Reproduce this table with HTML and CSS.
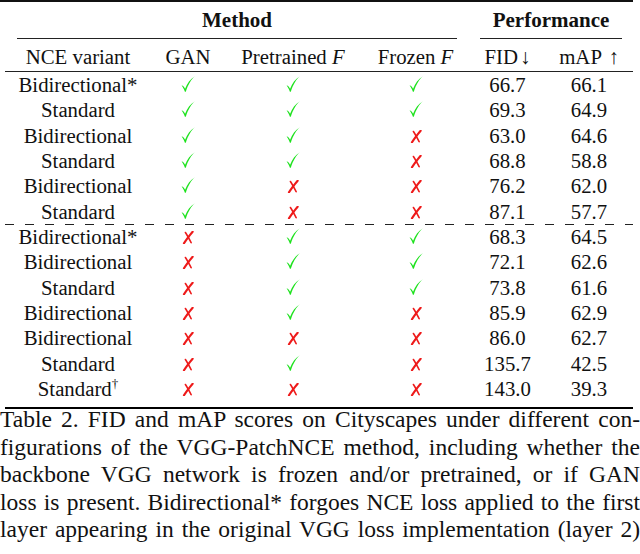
FILE: index.html
```html
<!DOCTYPE html>
<html>
<head>
<meta charset="utf-8">
<link rel="stylesheet" href="styles.css">
</head>
<body>
<div class="page">
  <div class="toprule"></div>
  <div class="grid">
    <div class="group method">Method</div>
    <div class="group perf">Performance</div>

    <div class="hd">NCE variant</div>
    <div class="hd">GAN</div>
    <div class="hd">Pretrained <i>F</i></div>
    <div class="hd">Frozen <i>F</i></div>
    <div class="hd">FID<span class="arr">↓</span></div>
    <div class="hd">mAP <span class="arr">↑</span></div>

    <div class="c">Bidirectional*</div><div class="c"><svg class="ck" viewBox="0 0 14 16"><path d="M0.6 9.6 C1.6 9.2 2.6 10.2 4.1 12.8 C6.2 7.6 9.2 3.1 13.8 0.3 C10.2 3.6 7.2 8.2 4.8 15.8 L3.9 15.8 C2.9 13.1 1.9 11.1 0.6 9.6 Z"/></svg></div><div class="c"><svg class="ck" viewBox="0 0 14 16"><path d="M0.6 9.6 C1.6 9.2 2.6 10.2 4.1 12.8 C6.2 7.6 9.2 3.1 13.8 0.3 C10.2 3.6 7.2 8.2 4.8 15.8 L3.9 15.8 C2.9 13.1 1.9 11.1 0.6 9.6 Z"/></svg></div><div class="c"><svg class="ck" viewBox="0 0 14 16"><path d="M0.6 9.6 C1.6 9.2 2.6 10.2 4.1 12.8 C6.2 7.6 9.2 3.1 13.8 0.3 C10.2 3.6 7.2 8.2 4.8 15.8 L3.9 15.8 C2.9 13.1 1.9 11.1 0.6 9.6 Z"/></svg></div><div class="c">66.7</div><div class="c">66.1</div>

    <div class="c">Standard</div><div class="c"><svg class="ck" viewBox="0 0 14 16"><path d="M0.6 9.6 C1.6 9.2 2.6 10.2 4.1 12.8 C6.2 7.6 9.2 3.1 13.8 0.3 C10.2 3.6 7.2 8.2 4.8 15.8 L3.9 15.8 C2.9 13.1 1.9 11.1 0.6 9.6 Z"/></svg></div><div class="c"><svg class="ck" viewBox="0 0 14 16"><path d="M0.6 9.6 C1.6 9.2 2.6 10.2 4.1 12.8 C6.2 7.6 9.2 3.1 13.8 0.3 C10.2 3.6 7.2 8.2 4.8 15.8 L3.9 15.8 C2.9 13.1 1.9 11.1 0.6 9.6 Z"/></svg></div><div class="c"><svg class="ck" viewBox="0 0 14 16"><path d="M0.6 9.6 C1.6 9.2 2.6 10.2 4.1 12.8 C6.2 7.6 9.2 3.1 13.8 0.3 C10.2 3.6 7.2 8.2 4.8 15.8 L3.9 15.8 C2.9 13.1 1.9 11.1 0.6 9.6 Z"/></svg></div><div class="c">69.3</div><div class="c">64.9</div>

    <div class="c">Bidirectional</div><div class="c"><svg class="ck" viewBox="0 0 14 16"><path d="M0.6 9.6 C1.6 9.2 2.6 10.2 4.1 12.8 C6.2 7.6 9.2 3.1 13.8 0.3 C10.2 3.6 7.2 8.2 4.8 15.8 L3.9 15.8 C2.9 13.1 1.9 11.1 0.6 9.6 Z"/></svg></div><div class="c"><svg class="ck" viewBox="0 0 14 16"><path d="M0.6 9.6 C1.6 9.2 2.6 10.2 4.1 12.8 C6.2 7.6 9.2 3.1 13.8 0.3 C10.2 3.6 7.2 8.2 4.8 15.8 L3.9 15.8 C2.9 13.1 1.9 11.1 0.6 9.6 Z"/></svg></div><div class="c"><svg class="xx" viewBox="0 0 12 14"><path d="M11 0.8 C8 4 5 8.5 1.6 13.2"/><path class="thin" d="M3.2 1.6 C5.5 5 7.5 9 9.4 12.6"/></svg></div><div class="c">63.0</div><div class="c">64.6</div>

    <div class="c">Standard</div><div class="c"><svg class="ck" viewBox="0 0 14 16"><path d="M0.6 9.6 C1.6 9.2 2.6 10.2 4.1 12.8 C6.2 7.6 9.2 3.1 13.8 0.3 C10.2 3.6 7.2 8.2 4.8 15.8 L3.9 15.8 C2.9 13.1 1.9 11.1 0.6 9.6 Z"/></svg></div><div class="c"><svg class="ck" viewBox="0 0 14 16"><path d="M0.6 9.6 C1.6 9.2 2.6 10.2 4.1 12.8 C6.2 7.6 9.2 3.1 13.8 0.3 C10.2 3.6 7.2 8.2 4.8 15.8 L3.9 15.8 C2.9 13.1 1.9 11.1 0.6 9.6 Z"/></svg></div><div class="c"><svg class="xx" viewBox="0 0 12 14"><path d="M11 0.8 C8 4 5 8.5 1.6 13.2"/><path class="thin" d="M3.2 1.6 C5.5 5 7.5 9 9.4 12.6"/></svg></div><div class="c">68.8</div><div class="c">58.8</div>

    <div class="c">Bidirectional</div><div class="c"><svg class="ck" viewBox="0 0 14 16"><path d="M0.6 9.6 C1.6 9.2 2.6 10.2 4.1 12.8 C6.2 7.6 9.2 3.1 13.8 0.3 C10.2 3.6 7.2 8.2 4.8 15.8 L3.9 15.8 C2.9 13.1 1.9 11.1 0.6 9.6 Z"/></svg></div><div class="c"><svg class="xx" viewBox="0 0 12 14"><path d="M11 0.8 C8 4 5 8.5 1.6 13.2"/><path class="thin" d="M3.2 1.6 C5.5 5 7.5 9 9.4 12.6"/></svg></div><div class="c"><svg class="xx" viewBox="0 0 12 14"><path d="M11 0.8 C8 4 5 8.5 1.6 13.2"/><path class="thin" d="M3.2 1.6 C5.5 5 7.5 9 9.4 12.6"/></svg></div><div class="c">76.2</div><div class="c">62.0</div>

    <div class="c">Standard</div><div class="c"><svg class="ck" viewBox="0 0 14 16"><path d="M0.6 9.6 C1.6 9.2 2.6 10.2 4.1 12.8 C6.2 7.6 9.2 3.1 13.8 0.3 C10.2 3.6 7.2 8.2 4.8 15.8 L3.9 15.8 C2.9 13.1 1.9 11.1 0.6 9.6 Z"/></svg></div><div class="c"><svg class="xx" viewBox="0 0 12 14"><path d="M11 0.8 C8 4 5 8.5 1.6 13.2"/><path class="thin" d="M3.2 1.6 C5.5 5 7.5 9 9.4 12.6"/></svg></div><div class="c"><svg class="xx" viewBox="0 0 12 14"><path d="M11 0.8 C8 4 5 8.5 1.6 13.2"/><path class="thin" d="M3.2 1.6 C5.5 5 7.5 9 9.4 12.6"/></svg></div><div class="c">87.1</div><div class="c">57.7</div>

    <div class="dash"></div>

    <div class="c">Bidirectional*</div><div class="c"><svg class="xx" viewBox="0 0 12 14"><path d="M11 0.8 C8 4 5 8.5 1.6 13.2"/><path class="thin" d="M3.2 1.6 C5.5 5 7.5 9 9.4 12.6"/></svg></div><div class="c"><svg class="ck" viewBox="0 0 14 16"><path d="M0.6 9.6 C1.6 9.2 2.6 10.2 4.1 12.8 C6.2 7.6 9.2 3.1 13.8 0.3 C10.2 3.6 7.2 8.2 4.8 15.8 L3.9 15.8 C2.9 13.1 1.9 11.1 0.6 9.6 Z"/></svg></div><div class="c"><svg class="ck" viewBox="0 0 14 16"><path d="M0.6 9.6 C1.6 9.2 2.6 10.2 4.1 12.8 C6.2 7.6 9.2 3.1 13.8 0.3 C10.2 3.6 7.2 8.2 4.8 15.8 L3.9 15.8 C2.9 13.1 1.9 11.1 0.6 9.6 Z"/></svg></div><div class="c">68.3</div><div class="c">64.5</div>

    <div class="c">Bidirectional</div><div class="c"><svg class="xx" viewBox="0 0 12 14"><path d="M11 0.8 C8 4 5 8.5 1.6 13.2"/><path class="thin" d="M3.2 1.6 C5.5 5 7.5 9 9.4 12.6"/></svg></div><div class="c"><svg class="ck" viewBox="0 0 14 16"><path d="M0.6 9.6 C1.6 9.2 2.6 10.2 4.1 12.8 C6.2 7.6 9.2 3.1 13.8 0.3 C10.2 3.6 7.2 8.2 4.8 15.8 L3.9 15.8 C2.9 13.1 1.9 11.1 0.6 9.6 Z"/></svg></div><div class="c"><svg class="ck" viewBox="0 0 14 16"><path d="M0.6 9.6 C1.6 9.2 2.6 10.2 4.1 12.8 C6.2 7.6 9.2 3.1 13.8 0.3 C10.2 3.6 7.2 8.2 4.8 15.8 L3.9 15.8 C2.9 13.1 1.9 11.1 0.6 9.6 Z"/></svg></div><div class="c">72.1</div><div class="c">62.6</div>

    <div class="c">Standard</div><div class="c"><svg class="xx" viewBox="0 0 12 14"><path d="M11 0.8 C8 4 5 8.5 1.6 13.2"/><path class="thin" d="M3.2 1.6 C5.5 5 7.5 9 9.4 12.6"/></svg></div><div class="c"><svg class="ck" viewBox="0 0 14 16"><path d="M0.6 9.6 C1.6 9.2 2.6 10.2 4.1 12.8 C6.2 7.6 9.2 3.1 13.8 0.3 C10.2 3.6 7.2 8.2 4.8 15.8 L3.9 15.8 C2.9 13.1 1.9 11.1 0.6 9.6 Z"/></svg></div><div class="c"><svg class="ck" viewBox="0 0 14 16"><path d="M0.6 9.6 C1.6 9.2 2.6 10.2 4.1 12.8 C6.2 7.6 9.2 3.1 13.8 0.3 C10.2 3.6 7.2 8.2 4.8 15.8 L3.9 15.8 C2.9 13.1 1.9 11.1 0.6 9.6 Z"/></svg></div><div class="c">73.8</div><div class="c">61.6</div>

    <div class="c">Bidirectional</div><div class="c"><svg class="xx" viewBox="0 0 12 14"><path d="M11 0.8 C8 4 5 8.5 1.6 13.2"/><path class="thin" d="M3.2 1.6 C5.5 5 7.5 9 9.4 12.6"/></svg></div><div class="c"><svg class="ck" viewBox="0 0 14 16"><path d="M0.6 9.6 C1.6 9.2 2.6 10.2 4.1 12.8 C6.2 7.6 9.2 3.1 13.8 0.3 C10.2 3.6 7.2 8.2 4.8 15.8 L3.9 15.8 C2.9 13.1 1.9 11.1 0.6 9.6 Z"/></svg></div><div class="c"><svg class="xx" viewBox="0 0 12 14"><path d="M11 0.8 C8 4 5 8.5 1.6 13.2"/><path class="thin" d="M3.2 1.6 C5.5 5 7.5 9 9.4 12.6"/></svg></div><div class="c">85.9</div><div class="c">62.9</div>

    <div class="c">Bidirectional</div><div class="c"><svg class="xx" viewBox="0 0 12 14"><path d="M11 0.8 C8 4 5 8.5 1.6 13.2"/><path class="thin" d="M3.2 1.6 C5.5 5 7.5 9 9.4 12.6"/></svg></div><div class="c"><svg class="xx" viewBox="0 0 12 14"><path d="M11 0.8 C8 4 5 8.5 1.6 13.2"/><path class="thin" d="M3.2 1.6 C5.5 5 7.5 9 9.4 12.6"/></svg></div><div class="c"><svg class="xx" viewBox="0 0 12 14"><path d="M11 0.8 C8 4 5 8.5 1.6 13.2"/><path class="thin" d="M3.2 1.6 C5.5 5 7.5 9 9.4 12.6"/></svg></div><div class="c">86.0</div><div class="c">62.7</div>

    <div class="c">Standard</div><div class="c"><svg class="xx" viewBox="0 0 12 14"><path d="M11 0.8 C8 4 5 8.5 1.6 13.2"/><path class="thin" d="M3.2 1.6 C5.5 5 7.5 9 9.4 12.6"/></svg></div><div class="c"><svg class="ck" viewBox="0 0 14 16"><path d="M0.6 9.6 C1.6 9.2 2.6 10.2 4.1 12.8 C6.2 7.6 9.2 3.1 13.8 0.3 C10.2 3.6 7.2 8.2 4.8 15.8 L3.9 15.8 C2.9 13.1 1.9 11.1 0.6 9.6 Z"/></svg></div><div class="c"><svg class="xx" viewBox="0 0 12 14"><path d="M11 0.8 C8 4 5 8.5 1.6 13.2"/><path class="thin" d="M3.2 1.6 C5.5 5 7.5 9 9.4 12.6"/></svg></div><div class="c">135.7</div><div class="c">42.5</div>

    <div class="c">Standard<sup>†</sup></div><div class="c"><svg class="xx" viewBox="0 0 12 14"><path d="M11 0.8 C8 4 5 8.5 1.6 13.2"/><path class="thin" d="M3.2 1.6 C5.5 5 7.5 9 9.4 12.6"/></svg></div><div class="c"><svg class="xx" viewBox="0 0 12 14"><path d="M11 0.8 C8 4 5 8.5 1.6 13.2"/><path class="thin" d="M3.2 1.6 C5.5 5 7.5 9 9.4 12.6"/></svg></div><div class="c"><svg class="xx" viewBox="0 0 12 14"><path d="M11 0.8 C8 4 5 8.5 1.6 13.2"/><path class="thin" d="M3.2 1.6 C5.5 5 7.5 9 9.4 12.6"/></svg></div><div class="c">143.0</div><div class="c">39.3</div>
  </div>
  <div class="bottomrule"></div>
  <div class="caption">
    <span class="ln">Table 2. FID and mAP scores on Cityscapes under different con-</span>
    <span class="ln">figurations of the VGG-PatchNCE method, including whether the</span>
    <span class="ln">backbone VGG network is frozen and/or pretrained, or if GAN</span>
    <span class="ln">loss is present. Bidirectional* forgoes NCE loss applied to the first</span>
    <span class="ln">layer appearing in the original VGG loss implementation (layer 2)</span>
  </div>
</div>
</body>
</html>
```

FILE: styles.css
```css
html, body {
  margin: 0;
  padding: 0;
  background: #ffffff;
}

.page {
  width: 640px;
  font-family: "Liberation Serif", "Times New Roman", serif;
  color: #111;
}

.toprule {
  width: 633px;
  height: 2px;
  background: #111;
}

.grid {
  margin-left: 5px;
  width: 628px;
  display: grid;
  grid-template-columns: 146px 74px 136px 109px 75px 88px;
  font-size: 20.8px;
}

.group {
  font-weight: bold;
  font-size: 21px;
  text-align: center;
  line-height: 26px;
  padding: 5px 0 5px;
  border-bottom: 1px solid #222;
}

.method {
  grid-column: 1 / 5;
  margin: 0 13px 0 12px;
}

.perf {
  grid-column: 5 / 7;
  margin: 0 11px 0 10px;
}

.hd {
  text-align: center;
  line-height: 26px;
  padding: 5px 0 1px;
  border-bottom: 1px solid #222;
  white-space: nowrap;
}

.arr {
  margin-left: 2px;
}

.c {
  text-align: center;
  line-height: 25.35px;
  height: 25.35px;
  white-space: nowrap;
}

.c sup {
  font-size: 13px;
  line-height: 0;
  vertical-align: 8px;
}

.ck {
  width: 14px;
  height: 16px;
  vertical-align: baseline;
  fill: #1de21d;
}

.xx {
  width: 12px;
  height: 13px;
  vertical-align: baseline;
  fill: none;
  stroke: #ee1a1a;
  stroke-width: 2.3;
  stroke-linecap: round;
}

.xx .thin {
  stroke-width: 1.7;
}

.dash {
  grid-column: 1 / -1;
  height: 1px;
  margin-bottom: -1px;
  background: repeating-linear-gradient(to right, #222 0, #222 9px, transparent 9px, transparent 20px);
}

.bottomrule {
  margin: 6px 0 0 5px;
  width: 628px;
  height: 2px;
  background: #000;
}

.caption {
  width: 640px;
  margin-top: -3px;
  font-size: 23.5px;
  line-height: 27.5px;
}

.ln {
  display: block;
  text-align: justify;
  text-align-last: justify;
}
```
